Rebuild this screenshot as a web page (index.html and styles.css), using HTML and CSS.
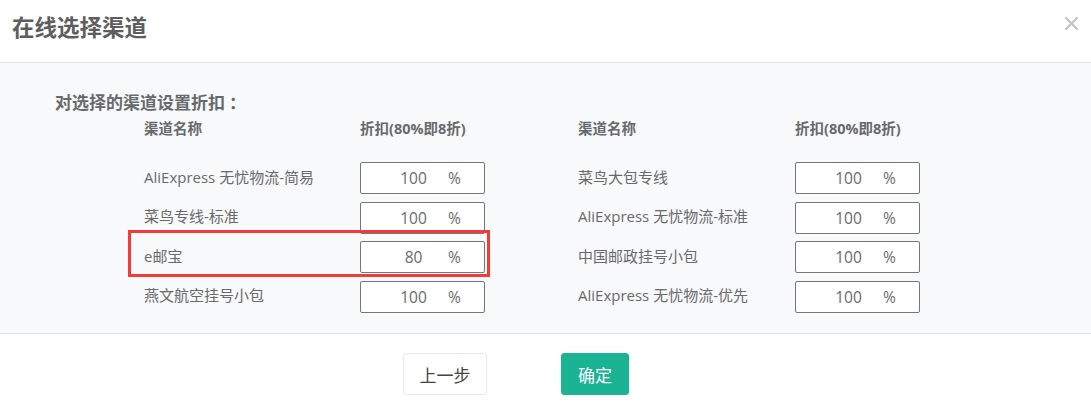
FILE: index.html
```html
<!DOCTYPE html>
<html lang="zh-CN">

<head>
    <meta charset="UTF-8" />
    <meta name="viewport" content="width=device-width, initial-scale=1.0" />
    <title>在线选择渠道</title>
    <link rel="stylesheet" href="styles.css">
</head>

<body>
    <div class="modal">
        <div class="modal-header">
            <h4 class="modal-title">在线选择渠道</h4>
            <button type="button" class="close" aria-label="关闭">
                <svg width="13" height="13" viewBox="0 0 13 13">
                    <path d="M1 1 L12 12 M12 1 L1 12" stroke="#c6c6c6" stroke-width="2.4" stroke-linecap="round" />
                </svg>
            </button>
        </div>

        <div class="modal-body">
            <h5 class="section-title">对选择的渠道设置折扣<span class="colon">：</span></h5>

            <div class="channel-tables">
                <div class="channel-table left">
                    <div class="col-head">渠道名称</div>
                    <div class="col-head">折扣(80%即8折)</div>

                    <div class="channel-name">AliExpress 无忧物流-简易</div>
                    <div class="pct-box"><input type="text" value="100" /><span>%</span></div>

                    <div class="channel-name">菜鸟专线-标准</div>
                    <div class="pct-box"><input type="text" value="100" /><span>%</span></div>

                    <div class="channel-name">e邮宝</div>
                    <div class="pct-box"><input type="text" value="80" /><span>%</span></div>

                    <div class="channel-name">燕文航空挂号小包</div>
                    <div class="pct-box"><input type="text" value="100" /><span>%</span></div>
                </div>

                <div class="channel-table right">
                    <div class="col-head">渠道名称</div>
                    <div class="col-head">折扣(80%即8折)</div>

                    <div class="channel-name">菜鸟大包专线</div>
                    <div class="pct-box"><input type="text" value="100" /><span>%</span></div>

                    <div class="channel-name">AliExpress 无忧物流-标准</div>
                    <div class="pct-box"><input type="text" value="100" /><span>%</span></div>

                    <div class="channel-name">中国邮政挂号小包</div>
                    <div class="pct-box"><input type="text" value="100" /><span>%</span></div>

                    <div class="channel-name">AliExpress 无忧物流-优先</div>
                    <div class="pct-box"><input type="text" value="100" /><span>%</span></div>
                </div>
            </div>

            <!-- 标注框 -->
            <div class="highlight"></div>
        </div>

        <div class="modal-footer">
            <button type="button" class="btn btn-white">上一步</button>
            <button type="button" class="btn btn-primary">确定</button>
        </div>
    </div>
</body>

</html>
```

FILE: styles.css
```css
* {
    box-sizing: border-box;
    margin: 0;
    padding: 0;
}

body {
    font-family: 'Open Sans', 'Noto Sans CJK SC', sans-serif;
    background: #fff;
    color: #676a6c;
    width: 1091px;
    height: 409px;
    overflow: hidden;
}

.modal {
    background: #fff;
}

.modal-header {
    display: flex;
    justify-content: space-between;
    height: 63px;
    padding: 13px 13px 0 12px;
    border-bottom: 1px solid #e5e5e5;
}

.modal-title {
    font-size: 22.5px;
    line-height: 30px;
    font-weight: bold;
    color: #5e5e5e;
}

.close {
    width: 13px;
    height: 13px;
    margin-top: 4px;
    border: none;
    background: none;
    cursor: pointer;
}

.close svg {
    display: block;
}

.modal-body {
    position: relative;
    background: #f8f9fa;
    padding: 30px 0 20px 55px;
    height: 270px;
}

.section-title {
    font-size: 17px;
    line-height: 20px;
    font-weight: bold;
    color: #676a6c;
}

.section-title .colon {
    padding-left: 4px;
}

.channel-tables {
    display: flex;
    gap: 93px;
    margin: 6px 0 0 89px;
}

.channel-table {
    display: grid;
    grid-template-columns: 216px 125px;
    row-gap: 7.5px;
    align-items: center;
}

.channel-table.right {
    grid-template-columns: 217px 125px;
}

.col-head {
    font-size: 14.5px;
    line-height: 20px;
    font-weight: bold;
    margin-bottom: 15.5px;
}

.channel-name {
    font-size: 15px;
    line-height: 20px;
    margin-top: -3px;
}

.pct-box {
    position: relative;
    height: 32px;
    border: 1px solid #767676;
    border-radius: 2px;
    background: #fff;
}

.pct-box input {
    width: 100%;
    height: 100%;
    border: none;
    outline: none;
    background: transparent;
    text-align: center;
    padding-right: 18px;
    font-family: inherit;
    font-size: 15.5px;
    color: #676a6c;
}

.pct-box span {
    position: absolute;
    left: 87px;
    top: 5px;
    font-size: 15.5px;
    line-height: 20px;
    color: #676a6c;
}

.highlight {
    position: absolute;
    top: 167px;
    left: 128px;
    width: 362px;
    height: 47px;
    border: 3px solid #f63a3a;
    pointer-events: none;
}

.modal-footer {
    display: flex;
    gap: 74px;
    padding: 19px 0 0 403px;
    border-top: 1px solid #e5e5e5;
}

.btn {
    height: 42px;
    border-radius: 3px;
    font-family: inherit;
    font-size: 17px;
    cursor: pointer;
}

.btn-white {
    width: 84px;
    background: #fff;
    border: 1px solid #e7eaec;
    color: #444;
}

.btn-primary {
    width: 68px;
    background: #1ab394;
    border: 1px solid #1ab394;
    color: #fff;
}
```
